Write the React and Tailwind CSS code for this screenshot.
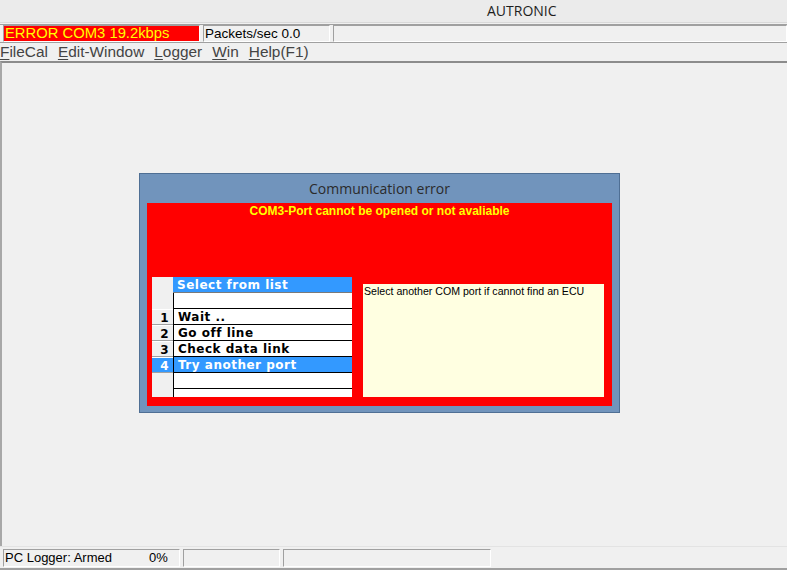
const ROWS = [
  { n: '', label: '' },
  { n: '1', label: 'Wait ..' },
  { n: '2', label: 'Go off line' },
  { n: '3', label: 'Check data link' },
  { n: '4', label: 'Try another port', active: true },
  { n: '', label: '' },
]

const MENU = [
  { k: 'F', rest: 'ileCal' },
  { k: 'E', rest: 'dit-Window' },
  { k: 'L', rest: 'ogger' },
  { k: 'W', rest: 'in' },
  { k: 'H', rest: 'elp(F1)' },
]

const sunken = 'border-t border-l border-t-[#a0a0a0] border-l-[#a0a0a0] border-b border-r border-b-white border-r-white'

export default function App() {
  return (
    <div className="w-[787px] h-[570px] overflow-hidden bg-[#f0f0f0] flex flex-col font-['Liberation_Sans',Arial,sans-serif] text-black">

      {/* Title bar */}
      <div className="h-[23px] shrink-0 bg-[#ebebeb] border-b border-[#d9d9d9] flex items-center pl-[487px]">
        <span className="font-['Open_Sans',sans-serif] text-[14px] text-[#1e1e1e] leading-none">AUTRONIC</span>
      </div>
      <div className="h-[2px] shrink-0 border-b border-[#a0a0a0]" />

      {/* Status row */}
      <div className="h-[17px] shrink-0 flex gap-[3px] pl-[3px]">
        <div className={`w-[197px] bg-[#ff0000] ${sunken} flex items-center pl-px`}>
          <span className="text-[#ffff00] text-[14.8px] leading-none">ERROR COM3 19.2kbps</span>
        </div>
        <div className={`w-[127px] ${sunken} flex items-center pl-px`}>
          <span className="text-[13.5px] leading-none">Packets/sec 0.0</span>
        </div>
        <div className={`flex-1 ${sunken}`} />
      </div>
      <div className="h-px shrink-0 bg-[#a0a0a0]" />

      {/* Menu */}
      <div className="h-[18px] shrink-0 flex items-center gap-[10px] text-[15.4px] text-[#444] leading-none">
        {MENU.map(({ k, rest }) => (
          <span key={k}><span className="underline underline-offset-2">{k}</span>{rest}</span>
        ))}
      </div>

      {/* Main area */}
      <div className="h-[485px] shrink-0 border-t-2 border-l-2 border-t-[#8c8c8c] border-l-[#a8a8a8] pt-[110px] pl-[137px]">
        <div className="w-[481px] h-[240px] bg-[#7194bc] border border-[#4f6f94] flex flex-col">
          <div className="h-[29px] flex items-center justify-center font-['Open_Sans',sans-serif] text-[14px] text-[#2b2b2b]">
            Communication error
          </div>

          <div className="mx-[7px] h-[203px] bg-[#ff0000] flex flex-col">
            <div className="h-[74px] text-center pt-[2px] font-bold text-[12px] text-[#ffff00] leading-[13px]">
              COM3-Port cannot be opened or not avaliable
            </div>

            <div className="flex items-start">
              {/* List */}
              <div className="ml-[5px] w-[200px] h-[120px] overflow-hidden flex flex-col bg-[#f0f0f0] font-['DejaVu_Sans',sans-serif] font-bold text-[12px] tracking-[0.5px] leading-none">
                <div className="h-[16px] shrink-0 flex">
                  <div className="w-[21px]" />
                  <div className="flex-1 bg-[#3399ff] text-white border-b border-[#7a7a7a] flex items-center pl-[4px] pt-px">Select from list</div>
                </div>
                {ROWS.map((r, i) => (
                  <div key={i} className="h-[16px] shrink-0 flex">
                    <div className={`w-[21px] flex items-center justify-end pr-[4px] pt-px ${r.n ? 'border-b border-[#a0a0a0] border-t border-t-white' : ''} ${r.active ? 'bg-[#3399ff] text-white' : ''}`}>
                      {r.n}
                    </div>
                    <div className={`flex-1 border-l border-b border-black flex items-center pl-[4px] pt-px ${r.active ? 'bg-[#3399ff] text-white' : 'bg-white'}`}>
                      {r.label}
                    </div>
                  </div>
                ))}
                <div className="h-[16px] shrink-0 flex">
                  <div className="w-[21px]" />
                  <div className="flex-1 bg-white border-l border-black" />
                </div>
              </div>

              {/* Description box */}
              <div className="ml-[11px] mt-[7px] w-[241px] h-[113px] bg-[#ffffe1] pl-px pt-px text-[10.6px] leading-[12px]">
                Select another COM port if cannot find an ECU
              </div>
            </div>
          </div>
        </div>
      </div>

      {/* Bottom status bar */}
      <div className="flex-1 border-t border-[#e3e3e3] border-b-2 border-b-[#a0a0a0] flex items-center gap-[3px] pl-[3px]">
        <div className={`w-[177px] h-[18px] ${sunken} flex items-center pl-px text-[13px] leading-none`}>
          <span className="w-[144px]">PC Logger: Armed</span>
          <span>0%</span>
        </div>
        <div className={`w-[97px] h-[18px] ${sunken}`} />
        <div className={`w-[208px] h-[18px] ${sunken}`} />
      </div>
    </div>
  )
}
